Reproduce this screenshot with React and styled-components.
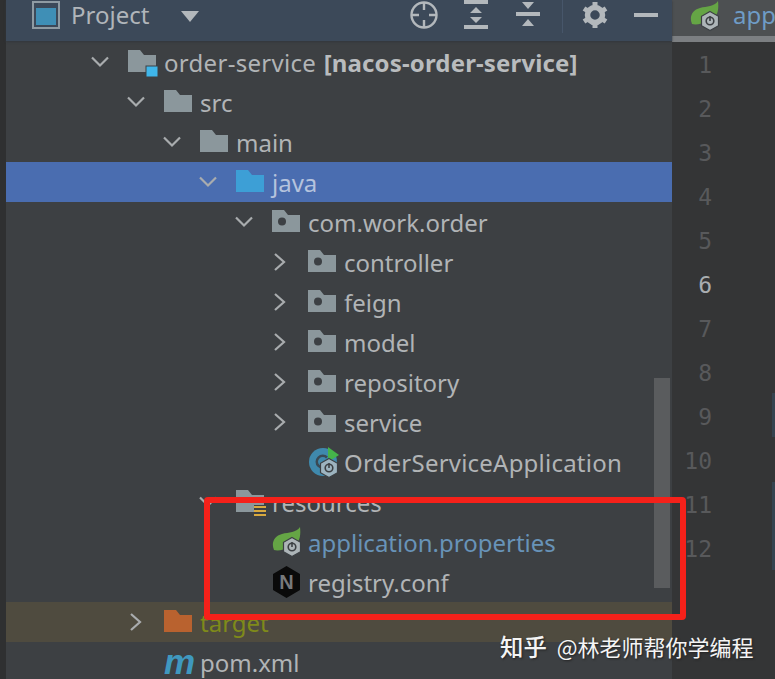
import React from "react";
import styled, { createGlobalStyle } from "styled-components";

const GlobalStyle = createGlobalStyle`
  html, body {
    margin: 0;
    padding: 0;
    background: #343536;
  }
`;

const Screen = styled.div`
  position: relative;
  display: grid;
  grid-template-columns: 6px 666px 1fr;
  width: 775px;
  height: 679px;
  overflow: hidden;
  font-family: "Noto Sans", "Open Sans", sans-serif;
`;

const Strip = styled.div`
  background: #2f3031;
`;

const ProjectPanel = styled.div`
  position: relative;
  display: flex;
  flex-direction: column;
  background: #3d4043;
`;

const Toolbar = styled.div`
  display: flex;
  align-items: center;
  flex: 0 0 41px;
  height: 41px;
  padding: 0 0 12px 26px;
  box-sizing: border-box;
  background: #3c4959;
  box-shadow: 0 1px 2px #33373c;
  color: #b3b8bc;
`;

const ToolbarTitle = styled.span`
  margin-left: 11px;
  width: 110px;
  font-size: 24px;
  line-height: 26px;
  color: #b0b5ba;
`;

const Caret = styled.svg`
  margin-top: 4px;
`;

const ToolButton = styled.span`
  display: flex;
  justify-content: center;
  flex: 0 0 ${(p) => p.$w}px;
  margin-left: ${(p) => p.$gap || 0}px;
`;

const Divider = styled.span`
  flex: 0 0 1px;
  height: 34px;
  margin: 0 0 -2px 22px;
  background: #47566a;
`;

const Tree = styled.div`
  display: flex;
  flex-direction: column;
  padding-top: 1px;
`;

const Row = styled.div`
  display: flex;
  align-items: center;
  flex: 0 0 40px;
  height: 40px;
  padding-left: ${(p) => 82 + p.$level * 36}px;
  background: ${(p) => (p.$selected ? "#4a6db0" : p.$ignored ? "#4f4b3f" : "transparent")};
`;

const Arrow = styled.span`
  display: flex;
  justify-content: center;
  flex: 0 0 24px;
  margin-right: 16px;
`;

const Icon = styled.span`
  display: flex;
  align-items: center;
  justify-content: flex-start;
  flex: 0 0 28px;
  min-width: 0;
  height: 32px;
  margin-right: 8px;
`;

const Label = styled.span`
  padding-top: 1px;
  font-size: 24px;
  line-height: 32px;
  letter-spacing: ${(p) => p.$spacing || 0}px;
  white-space: nowrap;
  color: ${(p) => p.$color || "#b1b4b6"};
`;

const Module = styled.b`
  margin-left: 1px;
  font-weight: 700;
  letter-spacing: 0.15px;
  color: #b9bcbe;
`;

const MavenMark = styled.span`
  font-family: "Liberation Sans", sans-serif;
  font-size: 35px;
  font-weight: 700;
  font-style: italic;
  line-height: 32px;
  color: #3f98bf;
`;

const Scrollbar = styled.div`
  position: absolute;
  top: 378px;
  right: 2px;
  width: 16px;
  height: 210px;
  background: #5a5c5e;
`;

const Editor = styled.div`
  display: flex;
  flex-direction: column;
  background: #343536;
`;

const Tab = styled.div`
  display: flex;
  align-items: flex-start;
  flex: 0 0 42px;
  height: 42px;
  box-sizing: border-box;
  padding-left: 18px;
  background: #4d5052;
  border-bottom: 6px solid #7c7f82;
`;

const TabLabel = styled.span`
  margin-left: 11px;
  font-size: 24px;
  line-height: 30px;
  color: #6f9cc6;
`;

const EditorBody = styled.div`
  display: flex;
  justify-content: space-between;
  flex: 1;
`;

const Gutter = styled.div`
  display: flex;
  flex-direction: column;
  width: 40px;
  padding-top: 1px;
`;

const LineNumber = styled.div`
  height: 44px;
  font-family: "DejaVu Sans Mono", monospace;
  font-size: 23px;
  line-height: 44px;
  text-align: right;
  color: ${(p) => (p.$current ? "#a9adb0" : "#58595b")};
`;

const Marks = styled.div`
  display: flex;
  flex-direction: column;
  gap: 45px;
  width: 4px;
  padding-top: 351px;
`;

const Mark = styled.div`
  height: ${(p) => p.$h}px;
  background: #35434f;
`;

const Highlight = styled.div`
  position: absolute;
  left: 204px;
  top: 497px;
  width: 482px;
  height: 123px;
  box-sizing: border-box;
  border: 6px solid #f5211a;
  border-radius: 4px;
`;

const Watermark = styled.div`
  position: absolute;
  left: 500px;
  top: 629px;
  display: flex;
  align-items: center;
  gap: 10px;
  font-family: "Noto Sans CJK SC", sans-serif;
  font-size: 22px;
  line-height: 34px;
  white-space: nowrap;
  color: #f4f4f4;
  text-shadow: 1px 1px 2px #222;
`;

const ZhihuName = styled.span`
  font-size: 23.4px;
  font-weight: 500;
`;

const Down = () => (
  <svg width="20" height="12" viewBox="0 0 20 12" fill="none">
    <path d="M2 1.5 10 9.5 18 1.5" stroke="#a9acae" strokeWidth="2.2" />
  </svg>
);

const Right = () => (
  <svg width="14" height="20" viewBox="0 0 14 20" fill="none">
    <path d="M2 2 11 10 2 18" stroke="#a9acae" strokeWidth="2.2" />
  </svg>
);

const FOLDER = "M0 0H12L16 5H28V22H0Z";

const Folder = ({ color = "#8b979c", dot, badge, lines }) => (
  <svg width="32" height="30" viewBox="0 0 32 30" style={{ flexShrink: 0 }}>
    <path d={FOLDER} transform="translate(0 3)" fill={color} />
    {dot && <circle cx="10" cy="14.5" r="4" fill="#3c4044" />}
    {badge && <rect x="18" y="19" width="12" height="11" fill="#3fb6ea" stroke="#3c4044" />}
    {lines && (
      <g fill="#d8a93f">
        <rect x="18" y="18" width="14" height="12" fill="#3d4043" />
        <rect x="18" y="19" width="12" height="2" />
        <rect x="18" y="23" width="12" height="2" />
        <rect x="18" y="27" width="12" height="2" />
      </g>
    )}
  </svg>
);

const Power = ({ cx, cy, fill = "#adb5b8" }) => (
  <g>
    <path
      d={`M${cx} ${cy - 9.5} ${cx + 8.5} ${cy - 4.7}V${cy + 4.7}L${cx} ${cy + 9.5} ${cx - 8.5} ${cy + 4.7}V${cy - 4.7}Z`}
      fill={fill}
      stroke="#3c4044"
      strokeWidth="1.2"
    />
    <circle cx={cx} cy={cy} r="3.8" fill="none" stroke="#3c4044" strokeWidth="1.6" />
    <path d={`M${cx} ${cy - 5}V${cy}`} stroke="#3c4044" strokeWidth="1.6" />
  </g>
);

const Spring = () => (
  <svg width="32" height="32" viewBox="0 0 32 32" style={{ flexShrink: 0 }}>
    <path d="M28 1C29 10 28 18 18 21 12 24 6 25 2 24 -1 17 2 10 10 8 17 6 24 7 28 1Z" fill="#65a545" />
    <Power cx={20} cy={21} />
  </svg>
);

const SpringClass = () => (
  <svg width="32" height="32" viewBox="0 0 32 32" style={{ flexShrink: 0 }}>
    <circle cx="15" cy="16" r="14" fill="#3f89ad" />
    <path d="M19 11.5A6 6 0 1 0 19 20" fill="none" stroke="#3a4a55" strokeWidth="2.5" />
    <path d="M20 1 31 9 20 16Z" fill="#45b34a" />
    <Power cx={21} cy={22} fill="#9db4c0" />
  </svg>
);

const Nginx = () => (
  <svg width="30" height="34" viewBox="0 0 30 34" style={{ flexShrink: 0 }}>
    <path d="M14.5 1 28 9V25L14.5 33 1 25V9Z" fill="#0a0a0a" />
    <text x="14.5" y="24" textAnchor="middle" fontFamily="Liberation Sans" fontWeight="700" fontSize="20" fill="#77797b">
      N
    </text>
  </svg>
);

const Toggle = ({ open }) => (
  <Arrow>{open === undefined ? null : open ? <Down /> : <Right />}</Arrow>
);

const packages = ["controller", "feign", "model", "repository", "service"];
const lines = [1, 2, 3, 4, 5, 6, 7, 8, 9, 10, 11, 12];

const App = () => (
  <>
    <GlobalStyle />
    <Screen>
      <Strip />
      <ProjectPanel>
        <Toolbar>
          <svg width="28" height="28" viewBox="0 0 28 28">
            <rect x="1" y="1" width="26" height="26" fill="#3c4959" stroke="#8f9ba3" strokeWidth="2" />
            <rect x="4" y="7" width="20" height="17" fill="#3f8fb6" />
          </svg>
          <ToolbarTitle>Project</ToolbarTitle>
          <Caret width="18" height="11" viewBox="0 0 18 11">
            <path d="M0 0H18L9 11Z" fill="#b3b8bc" />
          </Caret>
          <ToolButton $w={30} $gap={210}>
            <svg width="30" height="30" viewBox="0 0 30 30" fill="none" stroke="#b3b8bc" strokeWidth="2.4">
              <circle cx="15" cy="15" r="12.5" />
              <path d="M15 2V10M15 20V28M2 15H10M20 15H28" />
            </svg>
          </ToolButton>
          <ToolButton $w={24} $gap={25}>
            <svg width="24" height="30" viewBox="0 0 24 30" fill="#b3b8bc">
              <rect y="0" width="24" height="4" />
              <rect y="25" width="24" height="4" />
              <path d="M12 7 18 13H6ZM12 23 6 17H18Z" />
            </svg>
          </ToolButton>
          <ToolButton $w={24} $gap={28}>
            <svg width="24" height="30" viewBox="0 0 24 30" fill="#b3b8bc">
              <rect y="12" width="24" height="4" />
              <path d="M6 2H18L12 9ZM12 19 18 26H6Z" />
            </svg>
          </ToolButton>
          <Divider />
          <ToolButton $w={26} $gap={19}>
            <svg width="26" height="28" viewBox="0 0 26 28" fill="none" stroke="#b3b8bc">
              <circle cx="13" cy="14" r="7.5" strokeWidth="5.5" />
              <path
                d="M13 1V6M13 22V27M2 7.5 6 10M20 18 24 20.5M2 20.5 6 18M20 10 24 7.5"
                strokeWidth="5"
              />
            </svg>
          </ToolButton>
          <ToolButton $w={24} $gap={26}>
            <svg width="24" height="4" viewBox="0 0 24 4">
              <rect width="24" height="4" fill="#b3b8bc" />
            </svg>
          </ToolButton>
        </Toolbar>
        <Tree>
          <Row $level={0}>
            <Toggle open />
            <Icon>
              <Folder badge />
            </Icon>
            <Label $spacing={0.3}>
              order-service <Module>[nacos-order-service]</Module>
            </Label>
          </Row>
          <Row $level={1}>
            <Toggle open />
            <Icon>
              <Folder />
            </Icon>
            <Label>src</Label>
          </Row>
          <Row $level={2}>
            <Toggle open />
            <Icon>
              <Folder />
            </Icon>
            <Label>main</Label>
          </Row>
          <Row $level={3} $selected>
            <Toggle open />
            <Icon>
              <Folder color="#3d9fd6" />
            </Icon>
            <Label $color="#b5c3dd">java</Label>
          </Row>
          <Row $level={4}>
            <Toggle open />
            <Icon>
              <Folder dot />
            </Icon>
            <Label>com.work.order</Label>
          </Row>
          {packages.map((name) => (
            <Row $level={5} key={name}>
              <Toggle open={false} />
              <Icon>
                <Folder dot />
              </Icon>
              <Label>{name}</Label>
            </Row>
          ))}
          <Row $level={5}>
            <Toggle />
            <Icon>
              <SpringClass />
            </Icon>
            <Label $spacing={0.22}>OrderServiceApplication</Label>
          </Row>
          <Row $level={3}>
            <Toggle open />
            <Icon>
              <Folder lines />
            </Icon>
            <Label>resources</Label>
          </Row>
          <Row $level={4}>
            <Toggle />
            <Icon>
              <Spring />
            </Icon>
            <Label $color="#6893b8">application.properties</Label>
          </Row>
          <Row $level={4}>
            <Toggle />
            <Icon>
              <Nginx />
            </Icon>
            <Label>registry.conf</Label>
          </Row>
          <Row $level={1} $ignored>
            <Toggle open={false} />
            <Icon>
              <Folder color="#b9622f" />
            </Icon>
            <Label $color="#7f8a1a">target</Label>
          </Row>
          <Row $level={1}>
            <Toggle />
            <Icon>
              <MavenMark>m</MavenMark>
            </Icon>
            <Label>pom.xml</Label>
          </Row>
        </Tree>
        <Scrollbar />
      </ProjectPanel>
      <Editor>
        <Tab>
          <Spring />
          <TabLabel>app</TabLabel>
        </Tab>
        <EditorBody>
          <Gutter>
            {lines.map((n) => (
              <LineNumber key={n} $current={n === 6}>
                {n}
              </LineNumber>
            ))}
          </Gutter>
          <Marks>
            <Mark $h={44} />
            <Mark $h={88} />
          </Marks>
        </EditorBody>
      </Editor>
      <Highlight />
      <Watermark>
        <ZhihuName>知乎</ZhihuName>
        <span>@林老师帮你学编程</span>
      </Watermark>
    </Screen>
  </>
);

export default App;
